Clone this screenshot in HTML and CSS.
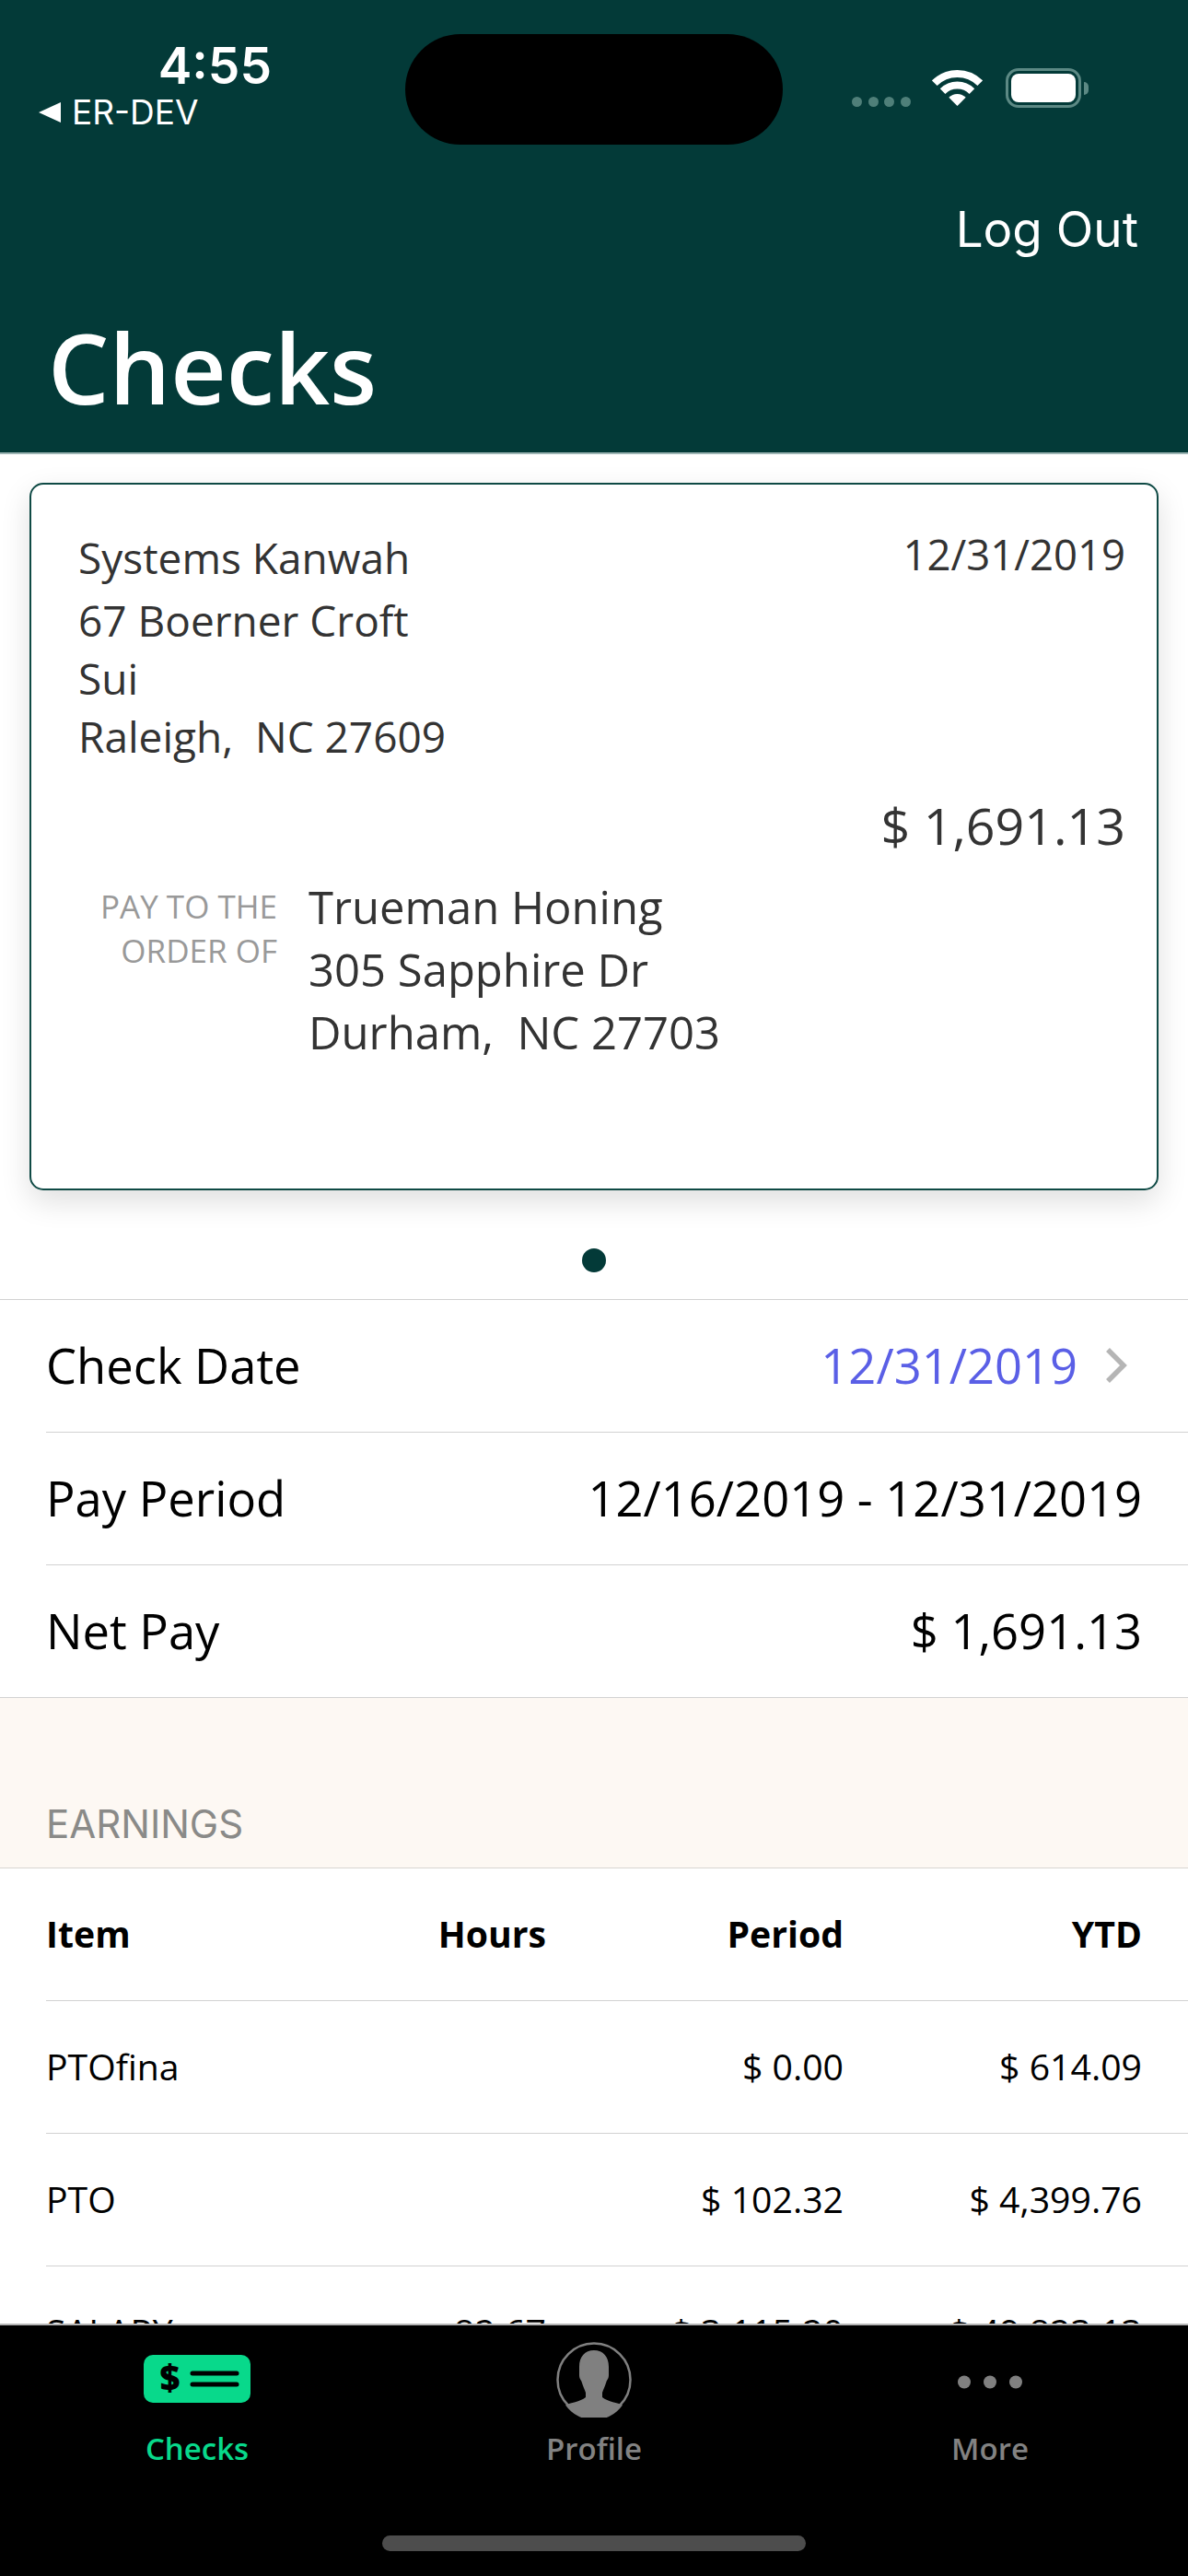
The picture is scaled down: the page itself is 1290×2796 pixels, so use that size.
FILE: index.html
```html
<!DOCTYPE html>
<html lang="en">
<head>
<meta charset="utf-8">
<title>Checks</title>
<link rel="stylesheet" href="styles.css">
</head>
<body>
<div class="phone">
  <header class="header">
    <div class="status">
      <div class="status-left">
        <div class="time">4:55</div>
        <div class="back"><span class="back-arrow"></span><span>ER-DEV</span></div>
      </div>
      <div class="island"></div>
      <div class="status-right">
        <div class="signal"><i></i><i></i><i></i><i></i></div>
        <svg class="wifi" viewBox="0 0 55 41" width="55" height="41" aria-hidden="true">
          <path d="M2.75 15.25A35 35 0 0 1 52.25 15.25" fill="none" stroke="#fff" stroke-width="8"/>
          <path d="M11.6 24.1A22.5 22.5 0 0 1 43.4 24.1" fill="none" stroke="#fff" stroke-width="8"/>
          <path d="M27.5 40L18.3 30.8A13 13 0 0 1 36.7 30.8Z" fill="#fff"/>
        </svg>
        <div class="battery"><div class="battery-fill"></div></div>
        <div class="battery-tip"></div>
      </div>
    </div>
    <div class="logout-row"><span class="logout">Log Out</span></div>
    <h1 class="title">Checks</h1>
  </header>

  <main class="content">
    <section class="check">
      <div class="check-top">
        <div class="payer">
          <div class="payer-name">Systems Kanwah</div>
          <div>67 Boerner Croft</div>
          <div>Sui</div>
          <div class="pre">Raleigh,  NC 27609</div>
        </div>
        <div class="check-date">12/31/2019</div>
      </div>
      <div class="check-amount">$ 1,691.13</div>
      <div class="pay-row">
        <div class="pay-label">PAY TO THE<br>ORDER OF</div>
        <div class="payee">
          <div>Trueman Honing</div>
          <div>305 Sapphire Dr</div>
          <div class="pre">Durham,  NC 27703</div>
        </div>
      </div>
    </section>

    <div class="pager"><span class="dot"></span></div>

    <section class="summary">
      <div class="row">
        <span>Check Date</span>
        <span class="row-link">
          <span class="link">12/31/2019</span>
          <svg class="chevron" viewBox="0 0 24 40" width="24" height="40" aria-hidden="true"><path d="M3 3L20 20L3 37" fill="none" stroke="#b5b5b5" stroke-width="5.5"/></svg>
        </span>
      </div>
      <div class="row"><span>Pay Period</span><span>12/16/2019 - 12/31/2019</span></div>
      <div class="row row-last"><span>Net Pay</span><span>$ 1,691.13</span></div>
    </section>

    <div class="section-head">EARNINGS</div>

    <section class="table">
      <div class="t-row t-head"><span>Item</span><span class="num">Hours</span><span class="num">Period</span><span class="num">YTD</span></div>
      <div class="t-row"><span>PTOfina</span><span class="num"></span><span class="num">$ 0.00</span><span class="num">$ 614.09</span></div>
      <div class="t-row"><span>PTO</span><span class="num"></span><span class="num">$ 102.32</span><span class="num">$ 4,399.76</span></div>
      <div class="t-row"><span>SALARY</span><span class="num">82.67</span><span class="num">$ 3,115.20</span><span class="num">$ 49,823.13</span></div>
    </section>
  </main>

  <nav class="tabbar">
    <div class="tabs">
      <div class="tab tab-active">
        <div class="tab-icon tab-icon-check">
          <svg viewBox="0 0 116 52" width="116" height="52" aria-hidden="true">
            <rect width="116" height="52" rx="10" fill="#08d98b"/>
            <text x="28.5" y="39" text-anchor="middle" class="dollar">$</text>
            <path d="M53 20H101M53 32H101" stroke="#000" stroke-width="5" stroke-linecap="round"/>
          </svg>
        </div>
        <span>Checks</span>
      </div>
      <div class="tab">
        <div class="tab-icon tab-icon-profile">
          <svg viewBox="0 0 82 82" width="82" height="82" aria-hidden="true">
            <circle cx="41" cy="41" r="39.5" fill="none" stroke="#808080" stroke-width="2.5"/>
            <path d="M41 9C31 9 25 16 25 27L25 36C25 40 27 41 27.5 43C29 48 31 52 32 55L32 60C26 65 15 66 10 68.5A38 38 0 0 0 72 68.5C67 66 56 65 50 60L50 55C51 52 53 48 54.5 43C55 41 57 40 57 36L57 27C57 16 51 9 41 9Z" fill="#808080"/>
          </svg>
        </div>
        <span>Profile</span>
      </div>
      <div class="tab">
        <div class="tab-icon tab-icon-more">
          <svg viewBox="0 0 70 15" width="70" height="15" aria-hidden="true">
            <circle cx="7" cy="7.5" r="7" fill="#808080"/><circle cx="35" cy="7.5" r="7" fill="#808080"/><circle cx="63" cy="7.5" r="7" fill="#808080"/>
          </svg>
        </div>
        <span>More</span>
      </div>
    </div>
    <div class="home-indicator"></div>
  </nav>
</div>
</body>
</html>
```

FILE: styles.css
```css
* { box-sizing: border-box; }
html, body { margin: 0; padding: 0; background: #fff; }
.phone {
  width: 1290px;
  height: 2796px;
  display: flex;
  flex-direction: column;
  overflow: hidden;
  font-family: "Open Sans", sans-serif;
  color: #000;
}
.header {
  height: 493px;
  flex: none;
  background: #033a38;
  color: #fff;
  border-bottom: 2px solid #9db5b4;
}
.status {
  height: 199px;
  position: relative;
  font-family: Inter, sans-serif;
}
.status-left {
  position: absolute;
  left: 42px;
  top: 41px;
  width: 253px;
  display: flex;
  flex-direction: column;
}
.time {
  align-self: flex-end;
  font-size: 55px;
  font-weight: 600;
  line-height: 60px;
}
.back {
  display: flex;
  align-items: center;
  gap: 12px;
  font-size: 37px;
  font-weight: 400;
  line-height: 40px;
  margin-top: 1px;
}
.back-arrow {
  width: 0;
  height: 0;
  border-top: 11px solid transparent;
  border-bottom: 11px solid transparent;
  border-right: 24px solid #fff;
}
.island {
  position: absolute;
  left: 440px;
  top: 37px;
  width: 410px;
  height: 120px;
  border-radius: 60px;
  background: #000;
}
.status-right {
  position: absolute;
  left: 925px;
  top: 74px;
  display: flex;
  align-items: flex-start;
}
.signal {
  display: flex;
  gap: 6.5px;
  margin-top: 31px;
  margin-right: 23px;
}
.signal i {
  display: block;
  width: 11px;
  height: 11px;
  border-radius: 50%;
  background: #4f7f79;
}
.wifi { margin-top: 1px; margin-right: 25px; }
.battery {
  width: 82px;
  height: 43px;
  border: 3px solid #5c8984;
  border-radius: 14px;
  padding: 3px;
}
.battery-fill {
  width: 100%;
  height: 100%;
  border-radius: 8px;
  background: #fff;
}
.battery-tip {
  width: 5px;
  height: 14px;
  margin: 15px 0 0 3px;
  background: #5c8984;
  border-radius: 0 7px 7px 0;
}
.logout-row {
  display: flex;
  justify-content: flex-end;
  padding-right: 54px;
  height: 100px;
  align-items: center;
  font-family: Inter, sans-serif;
}
.logout { font-size: 53px; line-height: 60px; }
.title {
  margin: 0;
  padding-left: 52px;
  font-size: 105px;
  font-weight: 600;
  line-height: 140px;
  margin-top: 30px;
  height: 140px;
  overflow: visible;
}
.content {
  flex: 1;
  min-height: 0;
  overflow: hidden;
  background: #fff;
}
.check {
  margin: 31px 32px 0;
  height: 768px;
  border: 2px solid #0f4a45;
  border-radius: 15px;
  padding: 48px 34px 0 51px;
  box-shadow: 0 12px 32px rgba(0, 0, 0, .13);
  color: #333;
  font-size: 46px;
  font-weight: 400;
}
.pre { white-space: pre; }
.check-top {
  display: flex;
  justify-content: space-between;
}
.payer { line-height: 63px; }
.payer-name { margin-bottom: 5px; }
.check-date { line-height: 54px; font-size: 45.5px; }
.check-amount {
  text-align: right;
  font-size: 55.5px;
  line-height: 74px;
  margin-top: 28px;
}
.pay-row {
  display: flex;
  margin-top: 17px;
  gap: 34px;
}
.pay-label {
  width: 216px;
  text-align: right;
  color: #999;
  font-size: 35px;
  line-height: 48px;
  margin-top: 10px;
}
.payee { font-size: 49px; line-height: 68px; }
.pager {
  height: 118px;
  padding-top: 63px;
  display: flex;
  justify-content: center;
}
.dot {
  width: 26px;
  height: 26px;
  border-radius: 50%;
  background: #033a38;
}
.summary { border-top: 1px solid #d2d2d2; }
.row {
  height: 144px;
  margin-left: 50px;
  padding: 0 50px 2px 0;
  display: flex;
  justify-content: space-between;
  align-items: center;
  border-bottom: 1px solid #d2d2d2;
  font-size: 52.5px;
}
.row-last {
  margin-left: 0;
  padding-left: 50px;
}
.row-link { display: flex; align-items: center; gap: 30px; }
.link { color: #5a5fe6; }
.chevron { margin-right: 16px; }
.section-head {
  height: 185px;
  background: #fdf8f3;
  border-bottom: 1px solid #d9d6d2;
  padding: 0 50px 22px;
  display: flex;
  align-items: flex-end;
  font-family: Inter, sans-serif;
  font-size: 42px;
  line-height: 50px;
  color: #8a8a88;
}
.t-row {
  height: 144px;
  margin-left: 50px;
  padding: 0 50px 3px 0;
  display: grid;
  grid-template-columns: 1fr 221px 323px 324px;
  align-items: center;
  border-bottom: 1px solid #d2d2d2;
  font-size: 39.2px;
}
.t-head { font-weight: 700; }
.num { text-align: right; }
.tabbar {
  height: 274px;
  flex: none;
  background: #000;
  border-top: 2px solid #b5b5b5;
  color: #828282;
  display: flex;
  flex-direction: column;
}
.tabs {
  display: grid;
  grid-template-columns: 428px 434px 426px;
  height: 228px;
}
.tab {
  display: flex;
  flex-direction: column;
  align-items: center;
  font-size: 33px;
  font-weight: 600;
  line-height: 46px;
}
.tab-active { color: #08d98b; }
.tab-icon {
  height: 109px;
  margin-top: 2px;
  display: flex;
  align-items: flex-start;
  justify-content: center;
}
.tab-icon-check { padding-top: 30px; }
.tab-icon-profile { padding-top: 16px; }
.tab-icon-more { padding-top: 52px; }
.tab-icon svg { display: block; }
.dollar {
  font-family: "Open Sans", sans-serif;
  font-size: 38px;
  font-weight: 800;
  fill: #000;
}
.home-indicator {
  width: 460px;
  height: 17px;
  border-radius: 9px;
  background: #4d4d4d;
  margin: 0 auto;
}
```
